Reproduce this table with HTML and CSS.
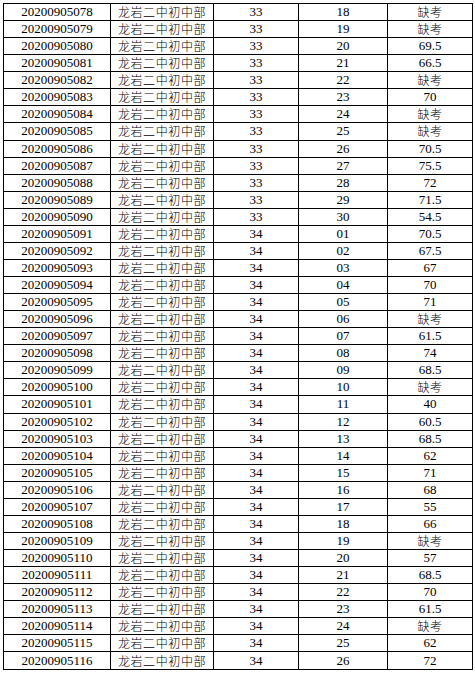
FILE: index.html
```html
<!DOCTYPE html>
<html lang="zh">
<head>
<meta charset="utf-8">
<link rel="stylesheet" href="styles.css">
</head>
<body>
<table class="grid">
<colgroup><col class="c1"><col class="c2"><col class="c3"><col class="c4"><col class="c5"></colgroup>
<tbody>
<tr><td>20200905078</td><td class="cn">龙岩二中初中部</td><td>33</td><td>18</td><td class="cn">缺考</td></tr>
<tr><td>20200905079</td><td class="cn">龙岩二中初中部</td><td>33</td><td>19</td><td class="cn">缺考</td></tr>
<tr><td>20200905080</td><td class="cn">龙岩二中初中部</td><td>33</td><td>20</td><td>69.5</td></tr>
<tr><td>20200905081</td><td class="cn">龙岩二中初中部</td><td>33</td><td>21</td><td>66.5</td></tr>
<tr><td>20200905082</td><td class="cn">龙岩二中初中部</td><td>33</td><td>22</td><td class="cn">缺考</td></tr>
<tr><td>20200905083</td><td class="cn">龙岩二中初中部</td><td>33</td><td>23</td><td>70</td></tr>
<tr><td>20200905084</td><td class="cn">龙岩二中初中部</td><td>33</td><td>24</td><td class="cn">缺考</td></tr>
<tr><td>20200905085</td><td class="cn">龙岩二中初中部</td><td>33</td><td>25</td><td class="cn">缺考</td></tr>
<tr><td>20200905086</td><td class="cn">龙岩二中初中部</td><td>33</td><td>26</td><td>70.5</td></tr>
<tr><td>20200905087</td><td class="cn">龙岩二中初中部</td><td>33</td><td>27</td><td>75.5</td></tr>
<tr><td>20200905088</td><td class="cn">龙岩二中初中部</td><td>33</td><td>28</td><td>72</td></tr>
<tr><td>20200905089</td><td class="cn">龙岩二中初中部</td><td>33</td><td>29</td><td>71.5</td></tr>
<tr><td>20200905090</td><td class="cn">龙岩二中初中部</td><td>33</td><td>30</td><td>54.5</td></tr>
<tr><td>20200905091</td><td class="cn">龙岩二中初中部</td><td>34</td><td>01</td><td>70.5</td></tr>
<tr><td>20200905092</td><td class="cn">龙岩二中初中部</td><td>34</td><td>02</td><td>67.5</td></tr>
<tr><td>20200905093</td><td class="cn">龙岩二中初中部</td><td>34</td><td>03</td><td>67</td></tr>
<tr><td>20200905094</td><td class="cn">龙岩二中初中部</td><td>34</td><td>04</td><td>70</td></tr>
<tr><td>20200905095</td><td class="cn">龙岩二中初中部</td><td>34</td><td>05</td><td>71</td></tr>
<tr><td>20200905096</td><td class="cn">龙岩二中初中部</td><td>34</td><td>06</td><td class="cn">缺考</td></tr>
<tr><td>20200905097</td><td class="cn">龙岩二中初中部</td><td>34</td><td>07</td><td>61.5</td></tr>
<tr><td>20200905098</td><td class="cn">龙岩二中初中部</td><td>34</td><td>08</td><td>74</td></tr>
<tr><td>20200905099</td><td class="cn">龙岩二中初中部</td><td>34</td><td>09</td><td>68.5</td></tr>
<tr><td>20200905100</td><td class="cn">龙岩二中初中部</td><td>34</td><td>10</td><td class="cn">缺考</td></tr>
<tr><td>20200905101</td><td class="cn">龙岩二中初中部</td><td>34</td><td>11</td><td>40</td></tr>
<tr><td>20200905102</td><td class="cn">龙岩二中初中部</td><td>34</td><td>12</td><td>60.5</td></tr>
<tr><td>20200905103</td><td class="cn">龙岩二中初中部</td><td>34</td><td>13</td><td>68.5</td></tr>
<tr><td>20200905104</td><td class="cn">龙岩二中初中部</td><td>34</td><td>14</td><td>62</td></tr>
<tr><td>20200905105</td><td class="cn">龙岩二中初中部</td><td>34</td><td>15</td><td>71</td></tr>
<tr><td>20200905106</td><td class="cn">龙岩二中初中部</td><td>34</td><td>16</td><td>68</td></tr>
<tr><td>20200905107</td><td class="cn">龙岩二中初中部</td><td>34</td><td>17</td><td>55</td></tr>
<tr><td>20200905108</td><td class="cn">龙岩二中初中部</td><td>34</td><td>18</td><td>66</td></tr>
<tr><td>20200905109</td><td class="cn">龙岩二中初中部</td><td>34</td><td>19</td><td class="cn">缺考</td></tr>
<tr><td>20200905110</td><td class="cn">龙岩二中初中部</td><td>34</td><td>20</td><td>57</td></tr>
<tr><td>20200905111</td><td class="cn">龙岩二中初中部</td><td>34</td><td>21</td><td>68.5</td></tr>
<tr><td>20200905112</td><td class="cn">龙岩二中初中部</td><td>34</td><td>22</td><td>70</td></tr>
<tr><td>20200905113</td><td class="cn">龙岩二中初中部</td><td>34</td><td>23</td><td>61.5</td></tr>
<tr><td>20200905114</td><td class="cn">龙岩二中初中部</td><td>34</td><td>24</td><td class="cn">缺考</td></tr>
<tr><td>20200905115</td><td class="cn">龙岩二中初中部</td><td>34</td><td>25</td><td>62</td></tr>
<tr><td>20200905116</td><td class="cn">龙岩二中初中部</td><td>34</td><td>26</td><td>72</td></tr>
</tbody>
</table>
</body>
</html>
```
FILE: styles.css
```css
html, body {
  margin: 0;
  padding: 0;
  background: #ffffff;
}
body {
  padding: 3px 0 0 3px;
}
.grid {
  border-collapse: collapse;
  table-layout: fixed;
  width: 469px;
  height: 667px;
  font-family: "Liberation Serif", "Noto Sans CJK SC", serif;
  font-size: 13px;
  color: #000000;
}
.c1 { width: 107px; }
.c2 { width: 103px; }
.c3 { width: 85px; }
.c4 { width: 89px; }
.c5 { width: 85px; }
.grid td {
  border: 1px solid #000000;
  padding: 0;
  text-align: center;
  vertical-align: middle;
  line-height: 14px;
  white-space: nowrap;
  overflow: hidden;
}
.grid td.cn {
  font-family: "Noto Sans CJK SC", sans-serif;
  font-size: 12px;
  font-weight: 300;
  letter-spacing: 0.6px;
  line-height: 14px;
}
```
